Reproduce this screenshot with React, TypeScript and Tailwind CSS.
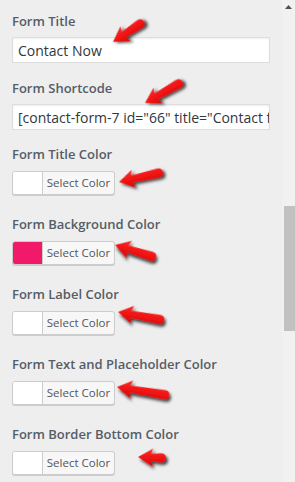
const LABEL_FONT = { fontFamily: '"Open Sans", "Noto Sans", sans-serif' }

type Arrow = {
  x: number
  y: number
  angle: number
  length: number
}

const COLOR_FIELDS = [
  { label: 'Form Title Color', swatch: 'bg-white' },
  { label: 'Form Background Color', swatch: 'bg-[#f0196a]' },
  { label: 'Form Label Color', swatch: 'bg-white' },
  { label: 'Form Text and Placeholder Color', swatch: 'bg-white' },
  { label: 'Form Border Bottom Color', swatch: 'bg-white' },
]

// tip position, direction of the tail and length, in page pixels
const ARROWS: Arrow[] = [
  { x: 113, y: 42, angle: -34, length: 36 },
  { x: 145, y: 103, angle: -30, length: 42 },
  { x: 119, y: 182, angle: -13, length: 44 },
  { x: 115, y: 245, angle: 17, length: 42 },
  { x: 118, y: 312, angle: 10, length: 46 },
  { x: 117, y: 387, angle: 9, length: 52 },
  { x: 138, y: 457, angle: 2, length: 27 },
]

export default function App() {
  return (
    <div
      className="relative flex h-[482px] w-[295px] overflow-hidden bg-[#eeeeee]"
      style={LABEL_FONT}
    >
      <div className="flex flex-1 flex-col pl-3 pr-3 pt-3">
        <TextField label="Form Title" value="Contact Now" />
        <div className="mt-4">
          <TextField
            label="Form Shortcode"
            value={'[contact-form-7 id="66" title="Contact form 1"]'}
          />
        </div>
        <div className="mt-[15px] flex flex-col gap-5">
          {COLOR_FIELDS.map(renderColorField)}
        </div>
      </div>
      <Scrollbar />
      <ArrowLayer />
    </div>
  )
}

function TextField({ label, value }: { label: string; value: string }) {
  return (
    <div className="flex flex-col">
      <span className="text-[13px] font-semibold leading-[18px] text-[#555d66]">
        {label}
      </span>
      <div className="mt-[7px] flex h-[26px] w-[258px] items-center overflow-hidden whitespace-nowrap border border-[#dddddd] bg-white px-[5px] text-[14px] text-[#32373c] shadow-[inset_0_1px_2px_rgba(0,0,0,0.07)]">
        {value}
      </div>
    </div>
  )
}

function renderColorField(field: { label: string; swatch: string }) {
  return (
    <div key={field.label} className="flex flex-col">
      <span className="text-[13px] font-semibold leading-[18px] text-[#555d66]">
        {field.label}
      </span>
      <div className="mt-2 flex h-[24px] w-[103px] overflow-hidden rounded-[3px] border border-[#cccccc] bg-[#f7f7f7] shadow-[0_1px_0_#cccccc]">
        <span className={`w-[30px] border-r border-[#cccccc] ${field.swatch}`} />
        <span className="flex flex-1 items-center justify-center text-[11.5px] text-[#555555]">
          Select Color
        </span>
      </div>
    </div>
  )
}

function Scrollbar() {
  return (
    <div className="flex w-[13px] flex-col items-center bg-[#f1f1f1]">
      <svg width="7" height="4" viewBox="0 0 7 4" className="mt-[5px]">
        <path d="M0 4 L3.5 0 L7 4 Z" fill="#505050" />
      </svg>
      <div className="ml-[2px] mt-[197px] h-[125px] w-[11px] bg-[#c1c1c1]" />
    </div>
  )
}

function ArrowLayer() {
  return (
    <svg
      className="pointer-events-none absolute left-0 top-0"
      width="295"
      height="482"
      viewBox="0 0 295 482"
    >
      <defs>
        <filter id="arrow-shadow" x="-30%" y="-60%" width="160%" height="220%">
          <feDropShadow dx="2" dy="2.5" stdDeviation="1.4" floodColor="#000" floodOpacity="0.75" />
        </filter>
        <linearGradient id="arrow-fill" x1="0" y1="0" x2="0" y2="1">
          <stop offset="0" stopColor="#ff2a2a" />
          <stop offset="1" stopColor="#e00000" />
        </linearGradient>
      </defs>
      {ARROWS.map(renderArrow)}
    </svg>
  )
}

function renderArrow(arrow: Arrow, index: number) {
  const l = arrow.length
  const d = `M0 0 L15 -9 L13 -3.5 L${l - 5} -4.5 Q${l + 1} -5 ${l + 1} 0 Q${l + 1} 5 ${l - 5} 4.5 L13 3.5 L15 9 Z`
  return (
    <g
      key={index}
      transform={`translate(${arrow.x} ${arrow.y}) rotate(${arrow.angle})`}
      filter="url(#arrow-shadow)"
    >
      <path d={d} fill="url(#arrow-fill)" />
    </g>
  )
}
